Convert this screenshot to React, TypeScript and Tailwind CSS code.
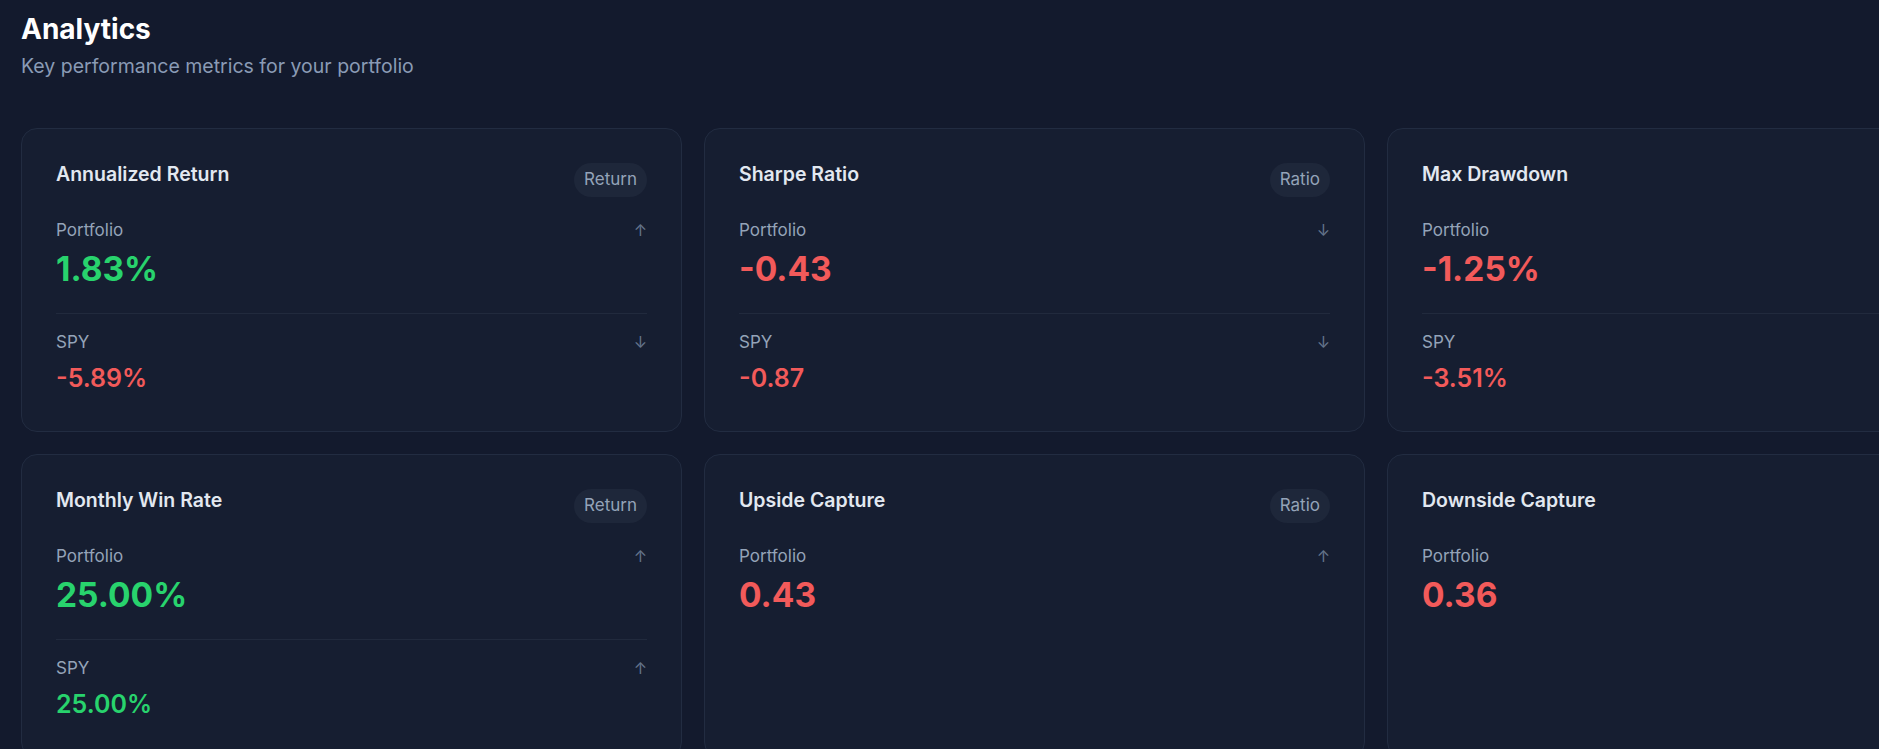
import React from "react";

type Row = { label: string; value: string; up: boolean; positive: boolean };
type Card = { title: string; badge: string; rows: Row[] };

const cards: Card[] = [
  {
    title: "Annualized Return",
    badge: "Return",
    rows: [
      { label: "Portfolio", value: "1.83%", up: true, positive: true },
      { label: "SPY", value: "-5.89%", up: false, positive: false },
    ],
  },
  {
    title: "Sharpe Ratio",
    badge: "Ratio",
    rows: [
      { label: "Portfolio", value: "-0.43", up: false, positive: false },
      { label: "SPY", value: "-0.87", up: false, positive: false },
    ],
  },
  {
    title: "Max Drawdown",
    badge: "Return",
    rows: [
      { label: "Portfolio", value: "-1.25%", up: false, positive: false },
      { label: "SPY", value: "-3.51%", up: false, positive: false },
    ],
  },
  {
    title: "Monthly Win Rate",
    badge: "Return",
    rows: [
      { label: "Portfolio", value: "25.00%", up: true, positive: true },
      { label: "SPY", value: "25.00%", up: true, positive: true },
    ],
  },
  {
    title: "Upside Capture",
    badge: "Ratio",
    rows: [{ label: "Portfolio", value: "0.43", up: true, positive: false }],
  },
  {
    title: "Downside Capture",
    badge: "Ratio",
    rows: [{ label: "Portfolio", value: "0.36", up: true, positive: false }],
  },
];

function MetricCard({ card }: { card: Card }) {
  return (
    <div className="rounded-2xl border border-[#222c41] bg-[#161e31] px-[34px] pt-[33px] pb-[36px]">
      <div className="flex items-start justify-between">
        <h3 className="text-[19.5px] leading-[25px] font-semibold text-[#e2e8f0]">{card.title}</h3>
        <span className="mt-[1px] flex h-[34px] items-center rounded-full bg-[#1e273a] px-[10px] text-[17px] text-[#94a3b8]">
          {card.badge}
        </span>
      </div>
      {card.rows.map((r, i) => (
        <div key={r.label}>
          {i > 0 && <div className="mt-[23px] border-t border-[#212a3d]" />}
          <div className={i === 0 ? "mt-[21px]" : "mt-[16px]"}>
            <div className="flex items-center justify-between">
              <span className="text-[17px] leading-[25px] text-[#94a3b8]">{r.label}</span>
              <span className="text-[16px] leading-[25px] text-[#64748b]">{r.up ? "↑" : "↓"}</span>
            </div>
            <div
              className={
                (i === 0
                  ? "mt-[5px] text-[33.5px] leading-[42px] font-bold "
                  : "mt-[6px] text-[25px] leading-[34px] font-semibold ") +
                (r.positive ? "text-[#28d36d]" : "text-[#f25a5a]")
              }
            >
              {r.value}
            </div>
          </div>
        </div>
      ))}
    </div>
  );
}

export default function App() {
  return (
    <div className="h-screen w-full overflow-hidden bg-[#131a2d] font-['Inter',sans-serif]">
      <div className="px-[21px] pt-[12px]">
        <h1 className="text-[28px] leading-[34px] font-bold text-white">Analytics</h1>
        <p className="mt-[6px] text-[19.5px] leading-[28px] text-[#8a9bb5]">
          Key performance metrics for your portfolio
        </p>
        <div className="mt-[48px] grid grid-cols-[repeat(3,661px)] gap-[22px]">
          {cards.map((c) => (
            <MetricCard key={c.title} card={c} />
          ))}
        </div>
      </div>
    </div>
  );
}
